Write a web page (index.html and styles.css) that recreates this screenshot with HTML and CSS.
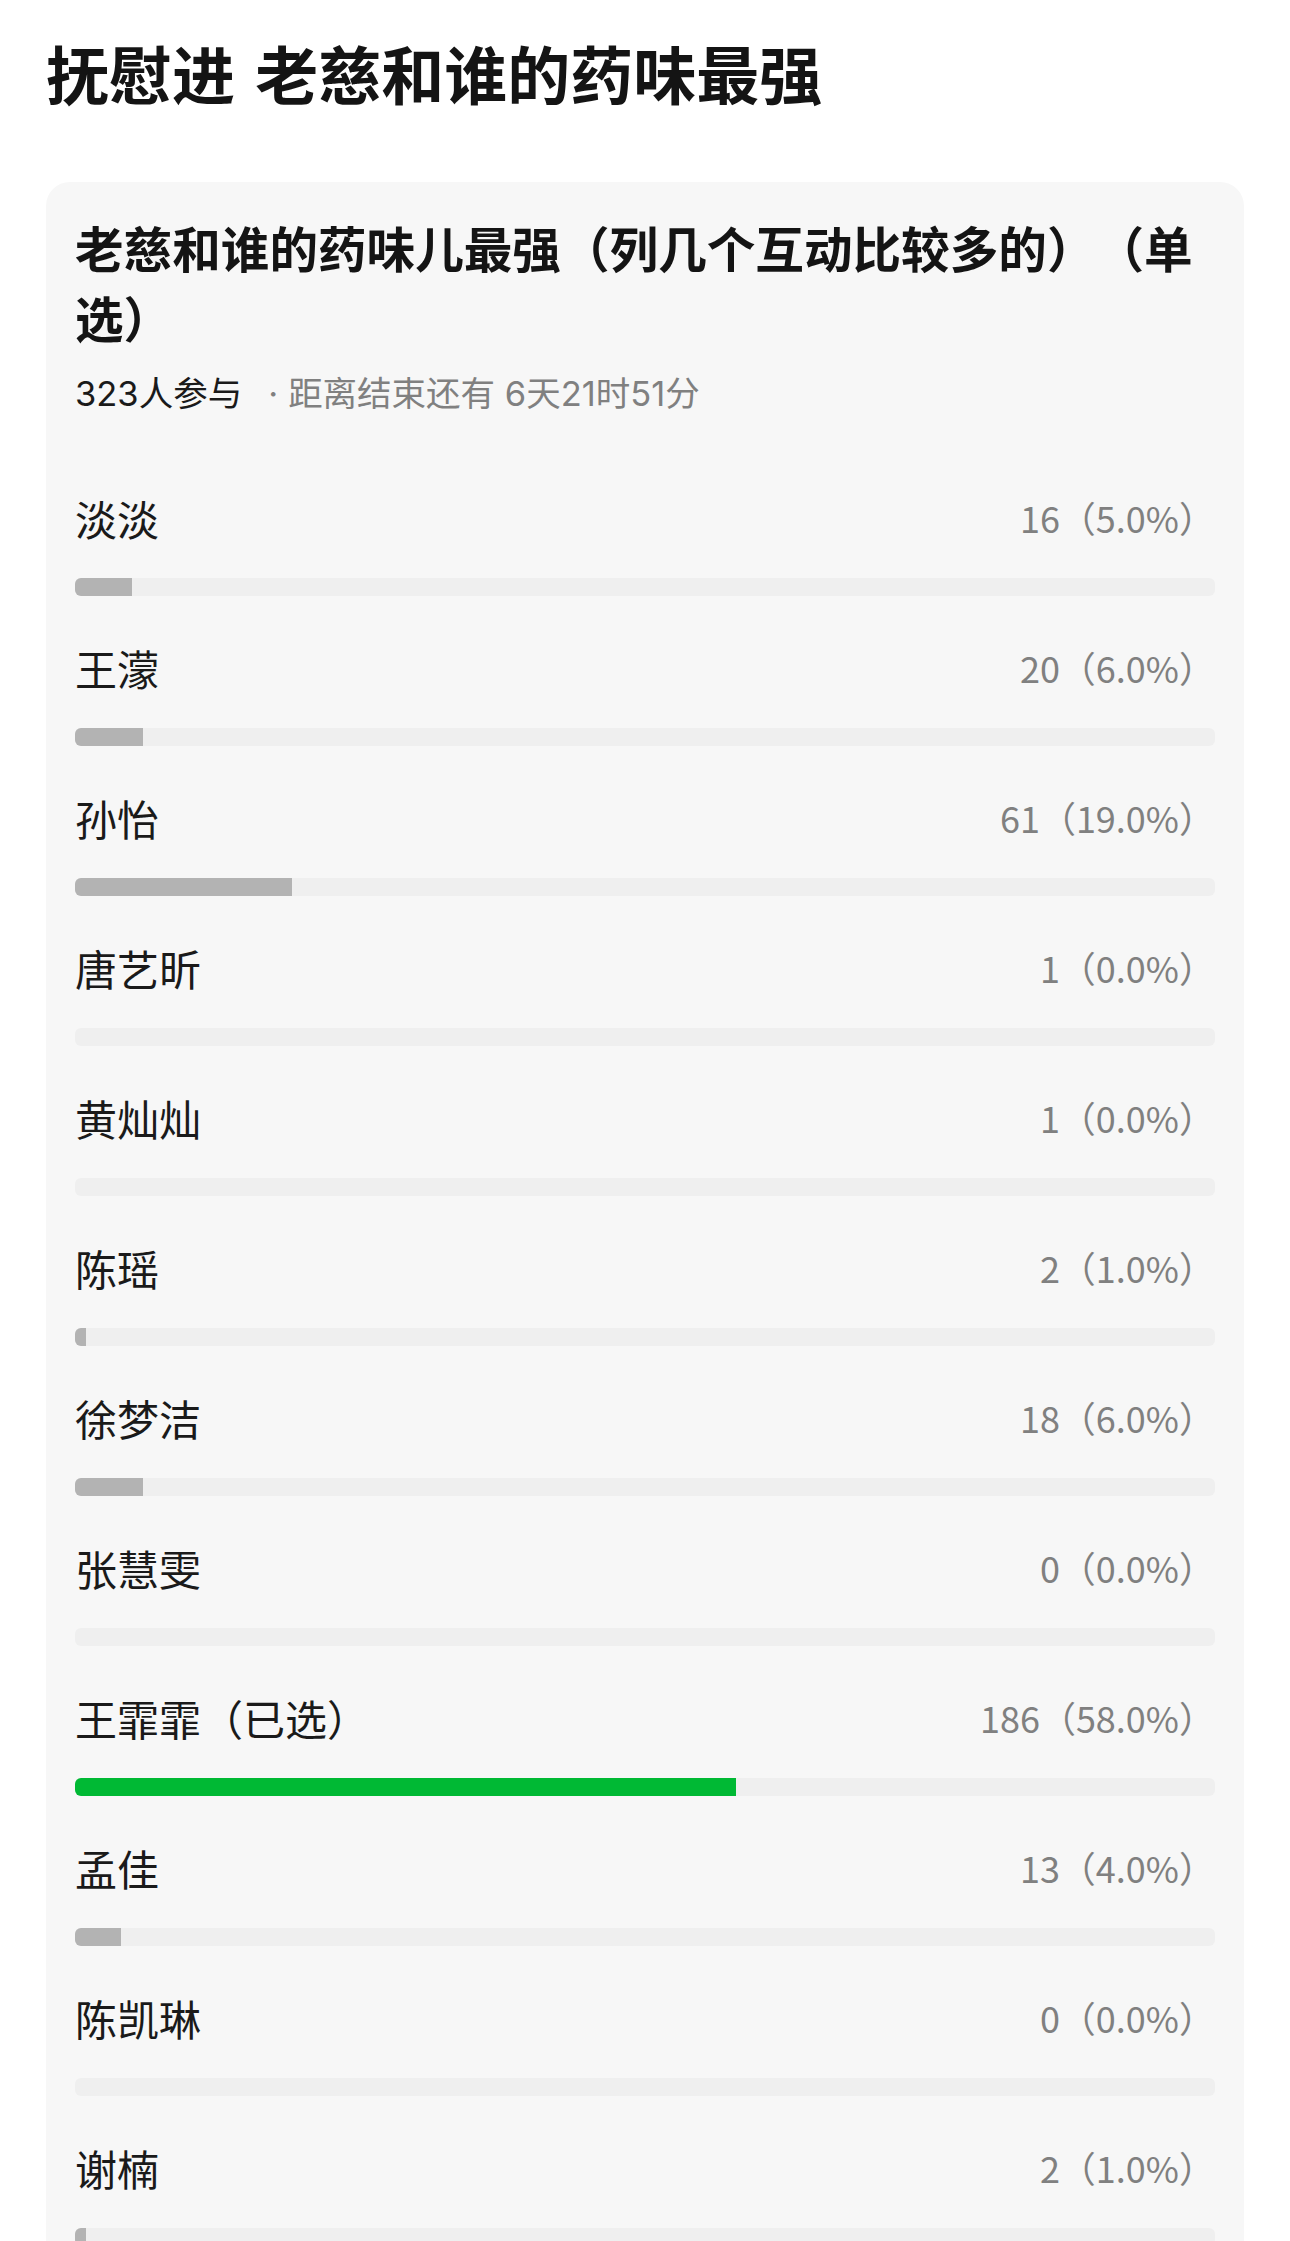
FILE: index.html
```html
<!DOCTYPE html>
<html lang="zh-CN">
<head>
    <meta charset="UTF-8">
    <meta name="viewport" content="width=device-width, initial-scale=1.0">
    <title>抚慰进 老慈和谁的药味最强</title>
    <link rel="stylesheet" href="styles.css">
</head>
<body>
    <div class="page">
        <h1 class="page-title">抚慰进 老慈和谁的药味最强</h1>

        <div class="card">
            <h2 class="card-title">老慈和谁的药味儿最强（列几个互动比较多的）（单选）</h2>
            <div class="meta"><span class="meta-count">323人参与</span><span class="dot">·</span>距离结束还有 6天21时51分</div>

            <div class="options">
                <div class="option">
                    <div class="option-head"><span class="name">淡淡</span><span class="count">16（5.0%）</span></div>
                    <div class="track"><div class="fill" style="width: 5%"></div></div>
                </div>
                <div class="option">
                    <div class="option-head"><span class="name">王濛</span><span class="count">20（6.0%）</span></div>
                    <div class="track"><div class="fill" style="width: 6%"></div></div>
                </div>
                <div class="option">
                    <div class="option-head"><span class="name">孙怡</span><span class="count">61（19.0%）</span></div>
                    <div class="track"><div class="fill" style="width: 19%"></div></div>
                </div>
                <div class="option">
                    <div class="option-head"><span class="name">唐艺昕</span><span class="count">1（0.0%）</span></div>
                    <div class="track"><div class="fill" style="width: 0%"></div></div>
                </div>
                <div class="option">
                    <div class="option-head"><span class="name">黄灿灿</span><span class="count">1（0.0%）</span></div>
                    <div class="track"><div class="fill" style="width: 0%"></div></div>
                </div>
                <div class="option">
                    <div class="option-head"><span class="name">陈瑶</span><span class="count">2（1.0%）</span></div>
                    <div class="track"><div class="fill" style="width: 1%"></div></div>
                </div>
                <div class="option">
                    <div class="option-head"><span class="name">徐梦洁</span><span class="count">18（6.0%）</span></div>
                    <div class="track"><div class="fill" style="width: 6%"></div></div>
                </div>
                <div class="option">
                    <div class="option-head"><span class="name">张慧雯</span><span class="count">0（0.0%）</span></div>
                    <div class="track"><div class="fill" style="width: 0%"></div></div>
                </div>
                <div class="option selected">
                    <div class="option-head"><span class="name">王霏霏（已选）</span><span class="count">186（58.0%）</span></div>
                    <div class="track"><div class="fill" style="width: 58%"></div></div>
                </div>
                <div class="option">
                    <div class="option-head"><span class="name">孟佳</span><span class="count">13（4.0%）</span></div>
                    <div class="track"><div class="fill" style="width: 4%"></div></div>
                </div>
                <div class="option">
                    <div class="option-head"><span class="name">陈凯琳</span><span class="count">0（0.0%）</span></div>
                    <div class="track"><div class="fill" style="width: 0%"></div></div>
                </div>
                <div class="option">
                    <div class="option-head"><span class="name">谢楠</span><span class="count">2（1.0%）</span></div>
                    <div class="track"><div class="fill" style="width: 1%"></div></div>
                </div>
            </div>
        </div>
    </div>
</body>
</html>
```

FILE: styles.css
```css
body {
    margin: 0;
    background: #fff;
    font-family: "Noto Sans CJK SC", "Noto Sans", sans-serif;
    color: #1a1a1a;
    text-spacing-trim: space-all;
}
.page {
    padding: 0 46px;
}
.page-title {
    margin: 32px 0 70px;
    font-size: 63px;
    line-height: 80px;
    font-weight: bold;
    word-spacing: 6px;
    color: #141414;
}
.card {
    background: #f7f7f7;
    border-radius: 24px;
    padding: 30px 29px 40px;
}
.card-title {
    margin: 0;
    font-size: 48.6px;
    line-height: 70px;
    font-weight: bold;
    color: #141414;
}
.meta {
    margin-top: 18px;
    font-family: Inter, "Noto Sans CJK SC", sans-serif;
    font-size: 34.5px;
    line-height: 48px;
    color: #808080;
}
.meta-count {
    color: #1a1a1a;
}
.dot {
    padding: 0 10px 0 26px;
}
.options {
    margin-top: 69px;
}
.option {
    margin-bottom: 41px;
}
.option-head {
    display: flex;
    justify-content: space-between;
    align-items: center;
    height: 60px;
}
.name {
    font-size: 42px;
    color: #1a1a1a;
}
.count {
    font-size: 36px;
    color: #808080;
}
.track {
    margin-top: 31px;
    height: 18px;
    background: #efefef;
    border-radius: 6px;
    overflow: hidden;
}
.fill {
    height: 100%;
    background: #b3b3b3;
}
.selected .fill {
    background: #00b934;
}
```
